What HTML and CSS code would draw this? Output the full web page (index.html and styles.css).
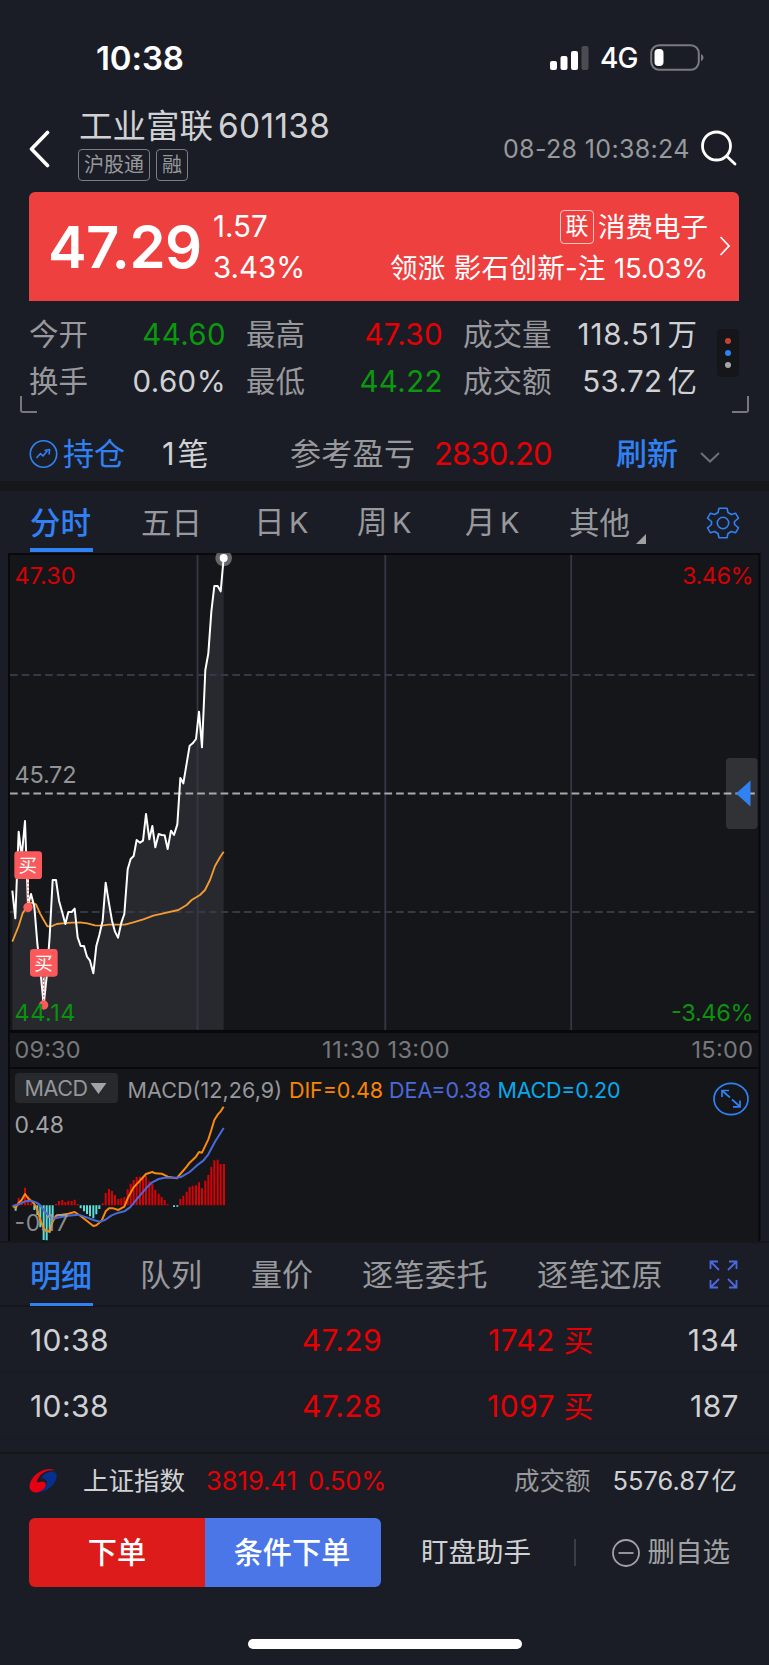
FILE: index.html
```
<!DOCTYPE html>
<html lang="zh-CN">
<head>
<meta charset="utf-8">
<title>工业富联 601138</title>
<link rel="stylesheet" href="styles.css">
</head>
<body>
<div class="app">
  <div class="status">
    <span class="clock">10:38</span>
    <svg class="signal" width="39" height="26" viewBox="0 0 39 26"><g fill="#fff"><rect x="0" y="16" width="7" height="9" rx="2"/><rect x="10.5" y="11" width="7" height="14" rx="2"/><rect x="21" y="6" width="7" height="19" rx="2"/><rect x="31.500" y="1" width="7" height="24" rx="2" fill="#4b4c52"/></g></svg>
    <span class="net">4G</span>
    <svg class="battery" width="55" height="27" viewBox="0 0 55 27"><rect x="1.200" y="1.200" width="47.600" height="24.600" rx="8" fill="none" stroke="#797a7f" stroke-width="2"/><rect x="4.500" y="5" width="9" height="17" rx="4" fill="#fff"/><path d="M51 10q2.500 1.200 2.500 3.500T51 17z" fill="#797a7f"/></svg>
  </div>

  <header class="head">
    <svg class="back" width="22" height="38" viewBox="0 0 22 38"><path d="M19.500 2.500 3.500 19l16 16.500" fill="none" stroke="#fff" stroke-width="3.600" stroke-linecap="round" stroke-linejoin="round"/></svg>
    <div class="name">
      <h1>工业富联<span>601138</span></h1>
      <div class="tags"><span>沪股通</span><span>融</span></div>
    </div>
    <span class="date">08-28 10:38:24</span>
    <svg class="search" width="38" height="38" viewBox="0 0 38 38"><g fill="none" stroke="#fff" stroke-width="2.800" stroke-linecap="round"><circle cx="16.500" cy="16" r="14"/><path d="m27 26.500 8 7.500"/></g></svg>
  </header>

  <section class="card">
    <div class="last">47.29</div>
    <div class="chg"><span>1.57</span><span>3.43%</span></div>
    <div class="sector">
      <div class="sector-name"><b>联</b>消费电子</div>
      <div class="leader">领涨 影石创新-注 <span>15.03%</span></div>
    </div>
    <svg class="more" width="12" height="20" viewBox="0 0 12 20"><path d="m1.500 1 8.500 9-8.500 9" fill="none" stroke="#fff" stroke-width="1.800"/></svg>
  </section>

  <section class="stats">
    <div class="grid">
      <span class="k">今开</span><span class="v green">44.60</span><span class="k">最高</span><span class="v red">47.30</span><span class="k">成交量</span><span class="v wide">118.51<i>万</i></span>
      <span class="k">换手</span><span class="v">0.60%</span><span class="k">最低</span><span class="v green">44.22</span><span class="k">成交额</span><span class="v">53.72<i>亿</i></span>
    </div>
    <div class="dots"><i></i><i></i><i></i></div>
    <div class="corners"><i></i><i></i></div>
  </section>

  <section class="position">
    <svg width="30" height="30" viewBox="0 0 30 30"><g fill="none" stroke="#2f81f4" stroke-width="1.600"><circle cx="14.500" cy="15" r="13.200"/><path d="m7.500 19 4-4.500 2.500 2.500 4.500-5.500M15.500 11.500l5-1-.3 5" stroke-linejoin="round"/></g></svg>
    <span class="hold">持仓</span><span class="count"><b>1</b>笔</span><span class="ref">参考盈亏</span><span class="pl red">2830.20</span><span class="refresh">刷新</span>
    <svg width="20" height="11" viewBox="0 0 20 11"><path d="m1 1 9 8.500L19 1" fill="none" stroke="#6e7075" stroke-width="2"/></svg>
  </section>

  <nav class="tabs">
    <span class="on">分时</span><span>五日</span><span>日<em>K</em></span><span>周<em>K</em></span><span>月<em>K</em></span><span class="other">其他</span>
    <svg width="34" height="34" viewBox="-17 -17 34 34"><g fill="none" stroke="#2f81f4" stroke-width="1.600" stroke-linejoin="round"><circle r="5.700"/><path d="M-4-14.800H4L5-10.500 8.300-8.500 12.500-9.800 15.500-4.800 11.500-1.500V1.500L15.500 4.800 12.500 9.800 8.300 8.500 5 10.500 4 14.800H-4L-5 10.500-8.300 8.500-12.500 9.800-15.500 4.800-11.500 1.500V-1.500L-15.500-4.800-12.500-9.800-8.300-8.500-5-10.500Z"/></g></svg>
  </nav>

  <svg class="chart" width="769" height="690" viewBox="0 553 769 690">
    <rect x="8" y="553" width="752.500" height="688" fill="#08090f"/>
    <rect x="0" y="1241" width="769" height="2" fill="#16171b"/>
    <rect x="10" y="555" width="748.500" height="475" fill="#15161a"/>
    <rect x="10" y="1033" width="748.500" height="34" fill="#15161a"/>
    <rect x="10" y="1069" width="748.500" height="172" fill="#15161a"/>
    <g transform="translate(0 550) scale(.33333)">
      <path fill="#28292e" d="M37 1439V1022L46 1105 56 845 65 920 75 813 84 1065 93 1032 103 1070 112 1180 121 1260 131 1365 140 1280 149 1160 158 990H168L177 1052 187 1088 196 1122 205 1086H215L224 1076 233 1162 242 1188H252L261 1220 270 1232 280 1270 289 1188 298 1155 308 1112 317 998 327 1060 336 1112 345 1145 354 1163 364 1118 373 1092 383 958 392 927 401 918 410 870 420 878 429 872 438 792 448 868 457 828 466 892 476 852 485 855 494 856 503 897 513 842 522 855 532 823 541 684 550 700 560 640 569 587 578 580 588 567 597 485 606 592 616 360 625 310 634 185 643 108H653L662 124 671 24V1439Z"/>
    </g>
    <path d="M197.500 555V1030M385.300 555V1030M571.200 555V1030" stroke="#353746" stroke-width="1.800"/>
    <g stroke-width="1.800" stroke-dasharray="7.700 4"><path d="M10 675H758.500M10 912H758.500" stroke="#363847"/><path d="M10 793.500H758.500" stroke="#a8a9ac"/></g>
    <g transform="translate(0 550) scale(.33333)" fill="none" stroke-linejoin="round">
      <path stroke="#f49b31" stroke-width="5.500" d="M37 1175 56 1128 68 1090 84 1065 93 1058 108 1063 120 1090 131 1110 142 1129H154L170 1122 187 1120 215 1118 240 1117 262 1120 285 1126 305 1127 325 1124H375L400 1117 430 1108 460 1097 490 1090 535 1080 560 1065 575 1050 600 1035 615 1020 630 990 645 948 660 922 671 905"/>
      <path stroke="#fff" stroke-width="6" d="M37 1022 46 1105 56 845 65 920 75 813 84 1065 93 1032 103 1070 112 1180 121 1260 131 1365 140 1280 149 1160 158 990H168L177 1052 187 1088 196 1122 205 1086H215L224 1076 233 1162 242 1188H252L261 1220 270 1232 280 1270 289 1188 298 1155 308 1112 317 998 327 1060 336 1112 345 1145 354 1163 364 1118 373 1092 383 958 392 927 401 918 410 870 420 878 429 872 438 792 448 868 457 828 466 892 476 852 485 855 494 856 503 897 513 842 522 855 532 823 541 684 550 700 560 640 569 587 578 580 588 567 597 485 606 592 616 360 625 310 634 185 643 108H653L662 124 671 24"/>
      <circle cx="671" cy="24" r="25" fill="#fff" fill-opacity=".35"/><circle cx="671" cy="24" r="12" fill="#fff"/>
      <path d="M84 986V1060M131 1280V1350" stroke="#fff" stroke-width="6"/>
      <path d="M84 986V1060M131 1280V1350" stroke="#fa5a5c" stroke-width="4" stroke-dasharray="5 6"/>
      <g fill="#fa5a5c"><circle cx="84" cy="1072" r="14"/><circle cx="131" cy="1365" r="14"/><rect x="43" y="904" width="83" height="83" rx="10"/><rect x="90" y="1197" width="83" height="83" rx="10"/></g>
    </g>
    <g font-size="18.500" fill="#fff"><text x="18.600" y="872.300">买</text><text x="34.300" y="970">买</text></g>
    <g font-size="23.500">
      <g fill="#d60003"><text x="14.500" y="583.800" textLength="61">47.30</text><text x="682" y="583.800" textLength="71.500">3.46%</text></g>
      <text x="14.500" y="783.300" textLength="62" fill="#929396">45.72</text>
      <g fill="#0b920e"><text x="14.500" y="1020.500" textLength="61">44.14</text><text x="671" y="1020.500" textLength="82.500">-3.46%</text></g>
      <g fill="#77787b"><text x="14.500" y="1058.300" textLength="66">09:30</text><text x="322" y="1058.300" textLength="58">11:30</text><text x="387.500" y="1058.300" textLength="62">13:00</text><text x="691.500" y="1058.300" textLength="61.500">15:00</text></g>
    </g>
    <rect x="726" y="758" width="31.500" height="71" rx="4" fill="#fff" fill-opacity=".12"/>
    <path d="M736 793.500 750.500 780.500V806.500Z" fill="#2f81f4"/>
    <rect x="15" y="1073" width="103" height="30" rx="4" fill="#27292d"/>
    <g font-size="21.500">
      <text x="24.500" y="1096" textLength="63.500" fill="#95979a">MACD</text>
      <path d="M90.500 1083H106.500L98.500 1094Z" fill="#a2a3a6"/>
      <text x="127.500" y="1098" textLength="154.500" fill="#95979a">MACD(12,26,9)</text>
      <text x="289" y="1098" textLength="94" fill="#f98500">DIF=0.48</text>
      <text x="389" y="1098" textLength="102" fill="#4b69d8">DEA=0.38</text>
      <text x="497.500" y="1098" textLength="123" fill="#08a9ec">MACD=0.20</text>
    </g>
    <g transform="translate(0 1050) scale(.33333)" fill="none">
      <path stroke="#d80204" stroke-width="6" d="M56 466V443M65 466V453M75 466V413M84 466V438M93 466V460M168 466V462M177 466V453M187 466V450M196 466V456M205 466V453M215 466V453M224 466V449M233 466V462M308 466V460M317 466V429M327 466V417M336 466V423M345 466V435M355 466V447M364 466V445M373 466V441M383 466V418M392 466V401M401 466V390M410 466V381M420 466V380M429 466V380M438 466V378M448 466V394M457 466V402M466 466V420M476 466V431M485 466V441M494 466V450M503 466V463M541 466V447M550 466V437M560 466V425M569 466V411M578 466V407M588 466V406M597 466V397M606 466V415M616 466V392M625 466V375M634 466V350M643 466V331M653 466V329M662 466V342M672 466V342"/>
      <path stroke="#5bdedc" stroke-width="6" d="M47 466V482M103 466V480M112 466V495M121 466V532M131 466V570M140 466V571M149 466V548M158 466V510M242 466V475M252 466V484M261 466V492M270 466V499M280 466V505M289 466V493M298 466V477M522 466V471M532 466V470"/>
      <path stroke="#fa8a0a" stroke-width="6" stroke-linejoin="round" d="M38 468 47 474 56 458 65 450 75 432 84 444 93 452 103 462 112 480 121 510 131 535 140 545 149 543 158 515 168 497 187 494 205 491 224 486 242 498 261 513 280 528 289 526 305 512 317 484 327 475H340L355 480 373 470 383 445 401 412 420 392 438 372 457 366 466 370 485 371 503 380 530 385 541 372 560 350 569 338 588 320 597 306 606 308 625 268 634 240 643 210 653 194 662 184 671 170"/>
      <path stroke="#4b69d8" stroke-width="6" stroke-linejoin="round" d="M38 468 56 463 75 454 93 452 110 458 121 466 135 485 149 500 160 506 180 502 205 497 235 494 260 502 280 510 300 515 315 510 335 496 355 488 373 484 390 472 410 448 438 415 457 397 476 387 494 383H530L545 380 569 366 590 347 610 332 625 313 645 275 671 234"/>
    </g>
    <g font-size="23" fill="#a0a2a5"><text x="14.500" y="1133" textLength="49.500">0.48</text><text x="14.500" y="1231" textLength="54" fill-opacity=".85">-0.17</text></g>
    <g fill="none" stroke="#2f81f4" stroke-width="1.700"><ellipse cx="731" cy="1099" rx="17" ry="15.600"/><path d="M722 1097V1090.500H729M722 1090.500 730 1097.500M732 1099.500 740 1106.500M740 1100.500V1106.800H733"/></g>
  </svg>

  <nav class="tabs detail">
    <span class="on">明细</span><span>队列</span><span>量价</span><span class="long">逐笔委托</span><span class="long">逐笔还原</span>
    <svg width="30" height="30" viewBox="0 0 30 30"><path d="M1.500 9V1.500H9M1.500 1.500l8.500 8.500M20 1.500h7.500V9M27.500 1.500 19 10M1.500 20v7.500H9M1.500 27.500 10 19M20 27.500h7.500V20M27.500 27.500 19 19" fill="none" stroke="#4a68df" stroke-width="1.800"/></svg>
  </nav>
  <div class="trade"><span>10:38</span><span class="red">47.29</span><span class="red">1742 买</span><span>134</span></div>
  <div class="trade"><span>10:38</span><span class="red">47.28</span><span class="red">1097 买</span><span>187</span></div>

  <section class="index">
    <svg width="28" height="26" viewBox="0 0 28 26"><path d="M27 3.500C22-2 9 2 3 11-2 19 1 25 8 24.500c6-1 10-5.500 8.500-9-1.500-3-5.500-1-8.500-1C8 9.500 14 3 20.500 2.500 23.500 2 26 2.500 27 3.500Z" fill="#e60012"/><path d="M27.500 6.500C26.500 1.500 15 3 12.500 10.500c2.500-.7 5 1 5.300 4.200.2 4-3.300 7.800-8.800 9.800C18 24.500 29 15 27.500 6.500Z" fill="#062f8e"/></svg>
    <span class="iname">上证指数</span><span class="red ival">3819.41</span><span class="red ipct">0.50%</span>
    <span class="turn">成交额</span><span class="tval">5576.87<i>亿</i></span>
  </section>

  <section class="actions">
    <div class="buy">下单</div><div class="cond">条件下单</div>
    <span class="watch">盯盘助手</span><i class="bar"></i>
    <svg width="30" height="30" viewBox="0 0 30 30"><g fill="none" stroke="#a1a2a4" stroke-width="1.800"><circle cx="15" cy="15" r="13"/><path d="M7.500 15h15"/></g></svg>
    <span class="del">删自选</span>
  </section>
  <div class="home"></div>
</div>
</body>
</html>
```
FILE: styles.css
```
* { box-sizing: border-box; }
body { margin: 0; background: #1b1d26; }
.app {
  width: 769px; height: 1665px; overflow: hidden;
  display: flex; flex-direction: column;
  font-family: Inter, "Noto Sans CJK SC", sans-serif;
  color: #d0d1d3; white-space: nowrap;
}
svg, .app > * { flex: none; }
svg { display: block; }
svg text { font-family: Inter, "Noto Sans CJK SC", sans-serif; }
i, em { font-style: normal; }
.red { color: #e60003; }
.green { color: #0a990e; }

.status { height: 100px; padding: 15px 0 0 96px; display: flex; align-items: center; color: #fff; }
.clock { width: 454px; font-size: 33px; font-weight: 600; letter-spacing: -.1px; line-height: 38px; }
.net { margin: 1px 0 0 11px; width: 50px; font-size: 28px; font-weight: 500; letter-spacing: -.8px; line-height: 32px; }

.head { height: 92px; padding-left: 28px; display: flex; align-items: flex-start; }
.back { margin-top: 29.500px; }
.name { margin-left: 28px; width: 425px; }
.head h1 { margin: 7px 0 0 1px; font-size: 33.500px; font-weight: 400; line-height: 38px; }
.head h1 span { margin-left: 5px; letter-spacing: .3px; }
.tags { display: flex; gap: 6px; margin-top: 4px; }
.tags span { height: 32px; padding: 0 5px; border: 1.500px solid #7c7d82; border-radius: 4px; font-size: 20px; line-height: 30px; color: #97989b; }
.date { width: 188px; margin-top: 34px; font-size: 25px; line-height: 30px; letter-spacing: .35px; color: #98999c; }
.search { margin: 29.500px 0 0 8.500px; }

.card { height: 109px; margin: 0 30px 0 29px; padding: 0 8px 0 19px; border-radius: 6px 6px 0 0; background: #ee403f; color: #fff; display: flex; align-items: center; }
.last { width: 165px; font-size: 58px; font-weight: 600; letter-spacing: -.6px; }
.chg { width: 100px; display: flex; flex-direction: column; gap: 1px; font-size: 29.500px; line-height: 40px; }
.sector { flex: 1; display: flex; flex-direction: column; align-items: flex-end; gap: 3px; font-size: 27.500px; line-height: 38px; }
.sector-name { display: flex; align-items: center; margin-top: 2px; }
.sector-name b { width: 34px; height: 34px; margin-right: 4px; border: 1.500px solid #fbc4c4; border-radius: 4px; font-size: 23px; font-weight: 400; line-height: 31px; text-align: center; }
.leader { letter-spacing: .35px; }
.leader span { letter-spacing: -.3px; }
.more { margin: -1px 0 0 11px; }

.stats { height: 114px; padding: 10px 30px 0 29px; display: grid; grid-template-columns: 668px 1fr; position: relative; }
.grid { display: grid; grid-template-columns: 60px 137px 79.500px 137.500px 94px 160px; grid-auto-rows: 47px; font-size: 29.500px; line-height: 47px; }
.grid .k { color: #98999c; }
.grid .v { text-align: right; letter-spacing: .4px; }
.grid .wide { letter-spacing: .9px; }
.grid .k:nth-child(6n+3), .grid .k:nth-child(6n+5) { padding-left: 20px; }
.grid .v i { margin-left: 5px; letter-spacing: 0; }
.dots { width: 22px; height: 48px; margin: 18px 0 0 20px; border-radius: 4px; background: #15161a; display: flex; flex-direction: column; align-items: center; justify-content: center; gap: 6px; }
.dots i { width: 6px; height: 6px; border-radius: 3px; background: #c8402f; }
.dots i:nth-child(2) { background: #2f81f4; }
.dots i:nth-child(3) { background: #a5a6a8; }
.corners { position: absolute; left: 20px; right: 20px; top: 95px; height: 17px; display: flex; justify-content: space-between; }
.corners i { width: 17px; border: 2px solid #77787c; border-top: 0; border-right: 0; border-bottom-left-radius: 3px; }
.corners i + i { border-right: 2px solid #77787c; border-left: 0; border-radius: 0 0 3px 0; }

.position { height: 66px; padding: 12px 0 0 29px; display: grid; grid-template-columns: 34px 99px 128px 144px 182px 84px 20px; align-items: center; font-size: 31px; line-height: 54px; }
.hold, .refresh { color: #2f81f4; }
.refresh { font-weight: 500; }
.count b { margin-right: 3px; font-weight: 400; }
.ref { color: #98999c; letter-spacing: .3px; }
.pl { letter-spacing: -.8px; }
.position > svg:last-child { margin-top: 6px; }

.tabs { height: 72px; padding-left: 30px; border-top: 10px solid #16171b; display: grid; grid-template-columns: 111px 113px 103px 108px 104px 137px 34px; align-items: center; font-size: 30.500px; line-height: 62px; color: #98999c; }
.tabs .on { width: 63px; height: 60px; margin-bottom: 2px; border-bottom: 4px solid #2f81f4; color: #2f81f4; font-weight: 500; }
.tabs em { margin-left: 4.500px; font-size: 29px; }
.other::after { content: ""; display: inline-block; margin-left: 6px; border-left: 10px solid transparent; border-bottom: 10px solid #a0a1a4; vertical-align: -10px; }

.detail { height: 64px; border-top: 0; border-bottom: 2px solid #15161a; grid-template-columns: 110px 111px 111px 175px 172px 30px; font-size: 31px; line-height: 64px; }
.detail .on { height: 62px; margin-bottom: 0; border-bottom-width: 3px; }
.detail .long { letter-spacing: .5px; }
.trade { height: 66px; padding: 0 30px; border-bottom: 1.500px solid #191a20; display: grid; grid-template-columns: 120px 232px 212px 145px; font-size: 30px; line-height: 66px; letter-spacing: .4px; }
.trade span:nth-child(n+2) { text-align: right; }

.index { height: 66px; margin-top: 13px; padding: 0 32px 11px 29px; border-top: 2px solid #15161a; display: flex; align-items: center; font-size: 25.500px; line-height: 53px; }
.iname { margin-left: 26px; width: 123px; }
.ival { width: 102px; }
.ipct { letter-spacing: -.2px; }
.turn { margin-left: auto; margin-right: 22px; color: #98999c; }
.tval i { margin-left: 2px; }

.actions { height: 69px; padding-left: 29px; display: flex; align-items: center; font-size: 27.500px; line-height: 69px; }
.buy, .cond { width: 176px; height: 69px; text-align: center; font-size: 29.200px; font-weight: 500; color: #fff; }
.buy { background: #dc1b1a; border-radius: 6px 0 0 6px; }
.cond { padding-right: 2px; background: #4a76e8; border-radius: 0 6px 6px 0; }
.watch { width: 153px; margin-left: 40px; }
.bar { width: 1.500px; height: 27px; margin-right: 35px; background: #3a3c46; }
.del { margin-left: 7px; color: #a1a2a4; }
.home { width: 274px; height: 10px; margin: 52px 0 0 247.500px; border-radius: 5px; background: #fff; }
```
